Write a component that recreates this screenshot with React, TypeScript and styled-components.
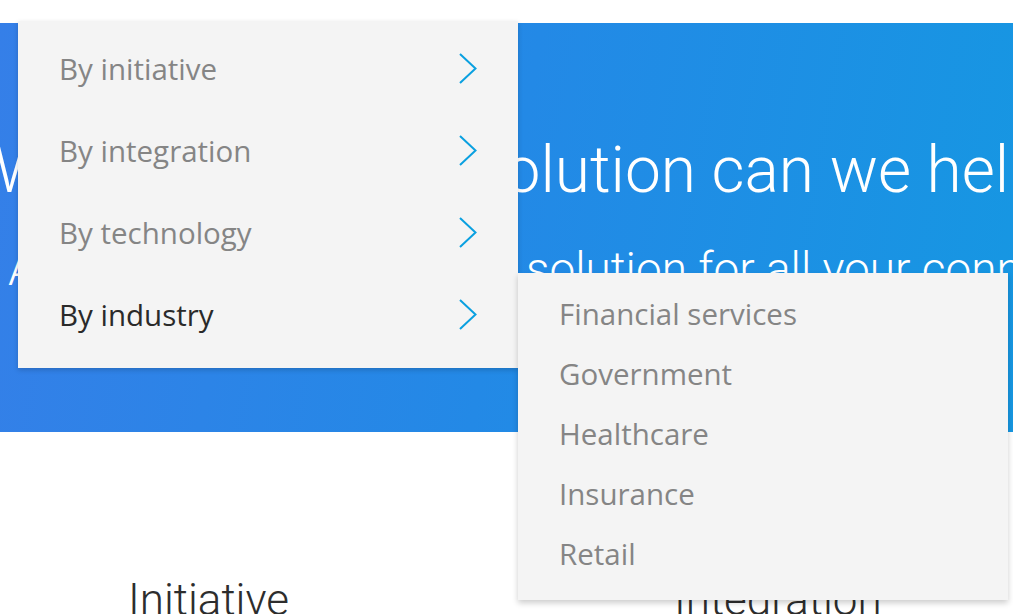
import React from "react";
import styled, { createGlobalStyle } from "styled-components";

const GlobalStyle = createGlobalStyle`
  html, body {
    margin: 0;
    padding: 0;
    background: #ffffff;
    overflow: hidden;
  }
  * { box-sizing: border-box; }
`;

const Page = styled.div`
  position: relative;
  width: 1013px;
  height: 614px;
  overflow: hidden;
  background: #ffffff;
`;

const TopBar = styled.header`
  height: 23px;
  background: #ffffff;
`;

const Hero = styled.section`
  height: 409px;
  padding-top: 116px;
  background: linear-gradient(100deg, #357fe8 0%, #2389e6 50%, #1697e2 100%);
  color: #ffffff;
  overflow: hidden;
  font-family: Roboto, "Liberation Sans", sans-serif;
  font-weight: 300;
`;

const HeroTitle = styled.h1`
  margin: 0 0 0 -6px;
  font-size: 64px;
  line-height: 64px;
  font-weight: 300;
  white-space: nowrap;
`;

const HeroSubtitle = styled.p`
  margin: 43px 0 0 8px;
  font-size: 46px;
  line-height: 46px;
  font-weight: 300;
  white-space: nowrap;
`;

const Categories = styled.section`
  display: grid;
  grid-template-columns: 546px 1fr;
  padding: 146px 0 0 128px;
`;

const CategoryTitle = styled.h2`
  margin: 0;
  font-family: Roboto, "Liberation Sans", sans-serif;
  font-weight: 300;
  font-size: 44px;
  line-height: 44px;
  color: #2d2d2d;
  white-space: nowrap;
`;

const MainMenu = styled.nav`
  position: absolute;
  left: 18px;
  top: 21px;
  width: 500px;
  height: 347px;
  padding: 6px 0 13px;
  background: #f4f4f4;
  box-shadow: 0 2px 5px rgba(0, 0, 0, 0.18);
  display: flex;
  flex-direction: column;
`;

const MenuItem = styled.div<{ $active?: boolean }>`
  height: 82px;
  flex: none;
  display: flex;
  align-items: center;
  justify-content: space-between;
  padding: 0 41px;
  font-family: "Open Sans", "Noto Sans", sans-serif;
  font-size: 29.5px;
  color: ${(p) => (p.$active ? "#2a2a2a" : "#858585")};
  cursor: pointer;
`;

const SubMenu = styled.ul`
  position: absolute;
  left: 518px;
  top: 273px;
  width: 490px;
  height: 327px;
  margin: 0;
  padding: 10px 0 16px;
  list-style: none;
  background: #f4f4f4;
  box-shadow: 0 3px 6px rgba(0, 0, 0, 0.2);
  display: flex;
  flex-direction: column;
`;

const SubItem = styled.li`
  height: 60px;
  flex: none;
  display: flex;
  align-items: center;
  padding: 0 41px;
  font-family: "Open Sans", "Noto Sans", sans-serif;
  font-size: 29.5px;
  color: #858585;
  cursor: pointer;
`;

const Chevron = () => (
  <svg width="18" height="31" viewBox="0 0 18 31" fill="none">
    <path d="M1 1 L16.5 15.5 L1 30" stroke="#0aa0e0" strokeWidth="2" />
  </svg>
);

const menuItems = [
  { label: "By initiative", active: false },
  { label: "By integration", active: false },
  { label: "By technology", active: false },
  { label: "By industry", active: true },
];

const industries = ["Financial services", "Government", "Healthcare", "Insurance", "Retail"];

export default function App() {
  return (
    <>
      <GlobalStyle />
      <Page>
        <TopBar />
        <Hero>
          <HeroTitle>What integration solution can we help you with?</HeroTitle>
          <HeroSubtitle>A single cloud integration solution for all your connectivity needs</HeroSubtitle>
        </Hero>
        <Categories>
          <CategoryTitle>Initiative</CategoryTitle>
          <CategoryTitle>Integration</CategoryTitle>
        </Categories>
        <MainMenu>
          {menuItems.map((m) => (
            <MenuItem key={m.label} $active={m.active}>
              <span>{m.label}</span>
              <Chevron />
            </MenuItem>
          ))}
        </MainMenu>
        <SubMenu>
          {industries.map((i) => (
            <SubItem key={i}>{i}</SubItem>
          ))}
        </SubMenu>
      </Page>
    </>
  );
}
